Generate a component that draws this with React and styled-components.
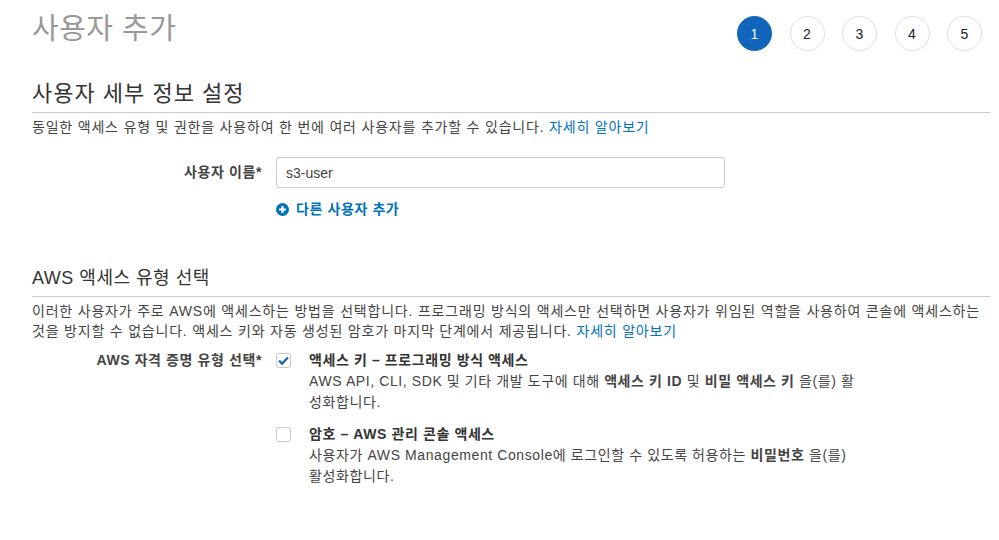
import React from 'react';
import styled, { createGlobalStyle } from 'styled-components';

const GlobalStyle = createGlobalStyle`
  body {
    margin: 0;
    background: #fff;
    font-family: "Liberation Sans", "Noto Sans CJK KR", sans-serif;
    color: #444;
  }
`;

const Page = styled.div`
  width: 999px;
  height: 540px;
  padding: 0 8px 0 32px;
  box-sizing: border-box;
  overflow: hidden;
`;

const Header = styled.div`
  display: flex;
  justify-content: space-between;
  align-items: flex-start;
  height: 80px;
`;

const Title = styled.h1`
  margin: 5px 0 0;
  font-size: 29px;
  font-weight: 400;
  color: #999;
  letter-spacing: 0.5px;
`;

const Steps = styled.div`
  display: flex;
  gap: 17.5px;
  margin-top: 16px;
  margin-right: 9px;
`;

const Step = styled.div`
  width: 35px;
  height: 35px;
  border-radius: 50%;
  box-sizing: border-box;
  border: 1px solid ${p => (p.$active ? '#1166bb' : '#dedede')};
  background: ${p => (p.$active ? '#1166bb' : '#fff')};
  color: ${p => (p.$active ? '#fff' : '#222')};
  display: flex;
  align-items: center;
  justify-content: center;
  font-size: 14px;
`;

const Section = styled.section`
  margin-bottom: ${p => p.$gap || 0}px;
`;

const SectionTitle = styled.h2`
  margin: 0;
  padding-bottom: 4px;
  border-bottom: 1px solid #ccc;
  font-size: ${p => p.$size || 22}px;
  font-weight: 400;
  letter-spacing: ${p => (p.$size ? 0.5 : 1)}px;
  color: #333;
  line-height: 28px;
`;

const Desc = styled.p`
  margin: 4px 0 0;
  font-size: 14px;
  letter-spacing: 0.8px;
  line-height: 20px;
  color: #444;
`;

const Link = styled.a`
  color: #0073bb;
  text-decoration: none;
`;

const Row = styled.div`
  display: grid;
  grid-template-columns: 230px 1fr;
  column-gap: 14px;
  margin-top: ${p => p.$top || 0}px;
`;

const Label = styled.div`
  text-align: right;
  font-size: 14px;
  letter-spacing: 0.6px;
  font-weight: 700;
  color: #444;
  line-height: ${p => p.$lh || 20}px;
`;

const Field = styled.div`
  display: flex;
  flex-direction: column;
`;

const Input = styled.input`
  width: 449px;
  height: 31px;
  box-sizing: border-box;
  border: 1px solid #ccc;
  border-radius: 3px;
  padding: 0 9px;
  font-family: inherit;
  font-size: 14px;
  color: #444;
  outline: none;
`;

const AddLink = styled.a`
  display: flex;
  align-items: center;
  gap: 7px;
  margin-top: 11px;
  line-height: 20px;
  color: #0073bb;
  font-size: 14px;
  letter-spacing: 0.6px;
  font-weight: 700;
  text-decoration: none;
`;

const Options = styled.div`
  display: flex;
  flex-direction: column;
  gap: 12px;
`;

const Option = styled.label`
  display: flex;
  gap: 18px;
  align-items: flex-start;
`;

const Box = styled.span`
  flex: none;
  width: 15px;
  height: 15px;
  margin-top: 2px;
  box-sizing: border-box;
  border: 1px solid #c8c8c8;
  border-radius: 3px;
  background: #fff;
  display: flex;
  align-items: center;
  justify-content: center;
`;

const OptionBody = styled.div`
  width: 550px;
  font-size: 14px;
  letter-spacing: 0.6px;
  line-height: 21px;
  color: #444;
`;

const OptionTitle = styled.div`
  font-weight: 700;
  color: #333;
  line-height: 18px;
  margin-bottom: 2px;
`;

const PlusIcon = () => (
  <svg width="13" height="13" viewBox="0 0 14 14">
    <circle cx="7" cy="7" r="7" fill="#0073bb" />
    <path d="M7 3.3v7.4M3.3 7h7.4" stroke="#fff" strokeWidth="2.4" />
  </svg>
);

const Check = () => (
  <svg width="11" height="9" viewBox="0 0 11 9">
    <path d="M1 4.6l3 3L10 1.4" fill="none" stroke="#1166bb" strokeWidth="2.2" />
  </svg>
);

export default function App() {
  return (
    <Page>
      <GlobalStyle />
      <Header>
        <Title>사용자 추가</Title>
        <Steps>
          {[1, 2, 3, 4, 5].map(n => (
            <Step key={n} $active={n === 1}>{n}</Step>
          ))}
        </Steps>
      </Header>

      <Section $gap={45}>
        <SectionTitle>사용자 세부 정보 설정</SectionTitle>
        <Desc>
          동일한 액세스 유형 및 권한을 사용하여 한 번에 여러 사용자를 추가할 수 있습니다. <Link href="#">자세히 알아보기</Link>
        </Desc>
        <Row $top={20}>
          <Label $lh={31}>사용자 이름*</Label>
          <Field>
            <Input defaultValue="s3-user" />
            <AddLink href="#"><PlusIcon />다른 사용자 추가</AddLink>
          </Field>
        </Row>
      </Section>

      <Section>
        <SectionTitle $size={18}>AWS 액세스 유형 선택</SectionTitle>
        <Desc>
          이러한 사용자가 주로 AWS에 액세스하는 방법을 선택합니다. 프로그래밍 방식의 액세스만 선택하면 사용자가 위임된 역할을 사용하여 콘솔에 액세스하는 것을 방지할 수 없습니다. 액세스 키와 자동 생성된 암호가 마지막 단계에서 제공됩니다. <Link href="#">자세히 알아보기</Link>
        </Desc>
        <Row $top={10}>
          <Label $lh={18}>AWS 자격 증명 유형 선택*</Label>
          <Options>
            <Option>
              <Box><Check /></Box>
              <OptionBody>
                <OptionTitle>액세스 키 – 프로그래밍 방식 액세스</OptionTitle>
                AWS API, CLI, SDK 및 기타 개발 도구에 대해 <b>액세스 키 ID</b> 및 <b>비밀 액세스 키</b> 을(를) 활성화합니다.
              </OptionBody>
            </Option>
            <Option>
              <Box />
              <OptionBody>
                <OptionTitle>암호 – AWS 관리 콘솔 액세스</OptionTitle>
                사용자가 AWS Management Console에 로그인할 수 있도록 허용하는 <b>비밀번호</b> 을(를) 활성화합니다.
              </OptionBody>
            </Option>
          </Options>
        </Row>
      </Section>
    </Page>
  );
}
